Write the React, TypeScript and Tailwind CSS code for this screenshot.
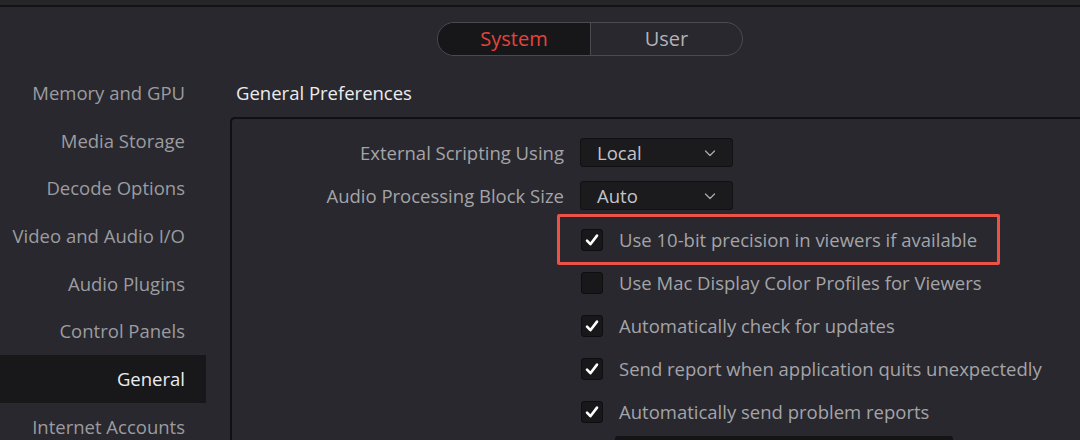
import React from 'react';

const sidebarItems = [
  'Memory and GPU',
  'Media Storage',
  'Decode Options',
  'Video and Audio I/O',
  'Audio Plugins',
  'Control Panels',
  'General',
  'Internet Accounts',
];

const checks = [
  { label: 'Use 10-bit precision in viewers if available', checked: true, highlight: true },
  { label: 'Use Mac Display Color Profiles for Viewers', checked: false },
  { label: 'Automatically check for updates', checked: true },
  { label: 'Send report when application quits unexpectedly', checked: true },
  { label: 'Automatically send problem reports', checked: true },
];

function Chevron() {
  return (
    <svg width="14" height="14" viewBox="0 0 14 14" fill="none">
      <path d="M2.5 5 L7 9.5 L11.5 5" stroke="#a8a8ac" strokeWidth="1.3" strokeLinecap="round" strokeLinejoin="round" />
    </svg>
  );
}

function Select({ value }: { value: string }) {
  return (
    <div className="ml-[16px] flex h-[29px] w-[153px] items-center justify-between rounded-[3px] border border-[#111113] bg-[#1b1b1e] pl-[16px] pr-[15px] text-[18.5px] text-[#c4c4c8]">
      <span>{value}</span>
      <Chevron />
    </div>
  );
}

function CheckBox({ checked }: { checked: boolean }) {
  return (
    <div className="flex h-[22px] w-[22px] shrink-0 items-center justify-center rounded-[3px] border border-[#0e0e10] bg-[#18181b]">
      {checked && (
        <svg width="16" height="16" viewBox="0 0 16 16" fill="none">
          <path d="M3 8.6 L6.4 12.2 L13 3.6" stroke="#ffffff" strokeWidth="2.6" strokeLinecap="round" strokeLinejoin="round" />
        </svg>
      )}
    </div>
  );
}

export default function App() {
  return (
    <div
      className="h-[440px] w-[1080px] overflow-hidden bg-[#28282e]"
      style={{ fontFamily: '"Open Sans", "Liberation Sans", sans-serif' }}
    >
      <div className="h-[5px] bg-[#262629]" />
      <div className="h-[2px] bg-[#131315]" />

      <div className="flex pl-[437px] pt-[15px]">
        <div className="flex h-[34px] w-[306px] overflow-hidden rounded-full border border-[#4a4a50]">
          <div className="flex w-[153px] items-center justify-center border-r border-[#4a4a50] bg-[#17171a] text-[20px] text-[#e3443b]">
            System
          </div>
          <div className="flex flex-1 items-center justify-center text-[20px] text-[#b2b2b6]">User</div>
        </div>
      </div>

      <div className="mt-[13px] flex">
        <div className="w-[206px] shrink-0">
          {sidebarItems.map((item) => (
            <div
              key={item}
              className={`flex h-[47.7px] items-center justify-end pr-[21px] text-[18.5px] ${
                item === 'General' ? 'bg-[#18181b] text-[#ececee]' : 'text-[#9c9ca0]'
              }`}
            >
              {item}
            </div>
          ))}
        </div>

        <div className="flex-1">
          <div className="flex h-[48px] items-center pl-[30px] text-[18.5px] text-[#ececee]">General Preferences</div>
          <div className="ml-[24px] h-[400px] rounded-tl-[5px] border-l-2 border-t-2 border-[#111113] pt-[19px]">
            <div className="flex h-[29px] items-center">
              <div className="w-[332px] text-right text-[18.5px] text-[#a4a4a8]">External Scripting Using</div>
              <Select value="Local" />
            </div>
            <div className="mt-[14px] flex h-[29px] items-center">
              <div className="w-[332px] text-right text-[18.5px] text-[#a4a4a8]">Audio Processing Block Size</div>
              <Select value="Auto" />
            </div>

            <div className="mt-[8px] pl-[349px]">
              {checks.map((c) => (
                <div key={c.label} className="relative flex h-[43px] items-center">
                  {c.highlight && (
                    <span className="absolute left-[-24px] top-[-4px] h-[51px] w-[443px] rounded-[2px] border-[3px] border-[#ee5247]" />
                  )}
                  <CheckBox checked={c.checked} />
                  <span className="ml-[16px] whitespace-nowrap text-[18.5px] text-[#a4a4a8]">{c.label}</span>
                </div>
              ))}
              <div className="ml-[34px] mt-[3px] h-[30px] w-[338px] rounded-[3px] bg-[#141416]" />
            </div>
          </div>
        </div>
      </div>
    </div>
  );
}
